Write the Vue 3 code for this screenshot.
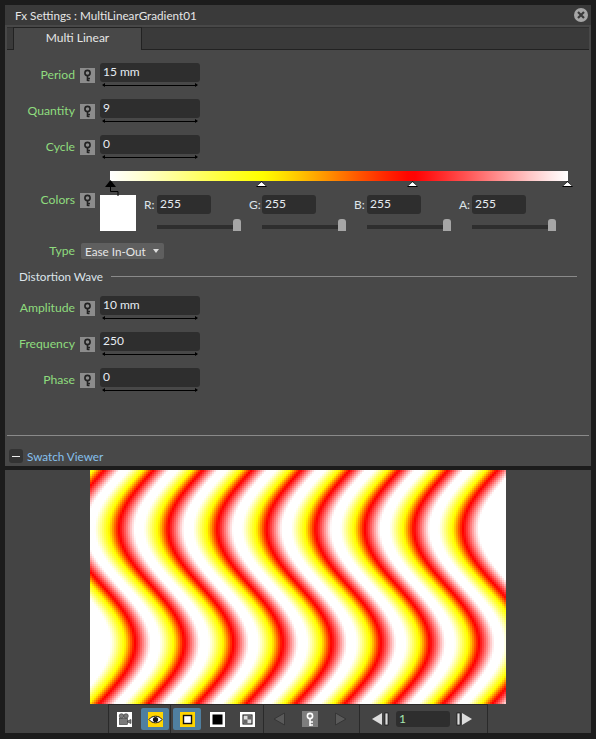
<template>
  <div class="app">
    <section class="settings">
      <header class="title">
        <span>Fx Settings : MultiLinearGradient01</span>
        <span class="close">
          <svg width="14" height="14" viewBox="0 0 14 14">
            <path d="M4 4l6 6M10 4l-6 6" stroke="#3a3a3a" stroke-width="2.2" fill="none" />
          </svg>
        </span>
      </header>
      <div class="tabs">
        <div class="tab">Multi Linear</div>
      </div>

      <div class="body">
        <div v-for="row in topRows" :key="row.label" class="param">
          <span class="label">{{ row.label }}</span>
          <svg class="key" width="15" height="15" viewBox="0 0 15 15">
            <rect width="15" height="15" fill="#8c8c8c" />
            <circle cx="7.5" cy="5" r="2.6" fill="none" stroke="#222" stroke-width="1.6" />
            <path d="M7.5 7v6M7.5 10.5h2.5M7.5 12.5h2" stroke="#222" stroke-width="1.6" fill="none" />
          </svg>
          <div class="field-wrap">
            <div class="field">{{ row.value }}</div>
            <div class="arrow"></div>
          </div>
        </div>

        <div class="colors">
          <div class="bar-wrap">
            <div class="bar" :style="{ background: barGradient }"></div>
            <span class="stop selected" style="left: 0"></span>
            <span class="stop" style="left: 151px"></span>
            <span class="stop" style="left: 302px"></span>
            <span class="stop" style="left: 457px"></span>
            <svg class="link" width="14" height="10" viewBox="0 0 14 10">
              <path d="M1.5 0v4.500h7.500v4.500" fill="none" stroke="#000" stroke-width="1" />
            </svg>
          </div>
          <div class="color-row">
            <span class="label">Colors</span>
            <svg class="key" width="15" height="15" viewBox="0 0 15 15">
              <rect width="15" height="15" fill="#8c8c8c" />
              <circle cx="7.5" cy="5" r="2.6" fill="none" stroke="#222" stroke-width="1.6" />
              <path d="M7.5 7v6M7.5 10.5h2.5M7.5 12.5h2" stroke="#222" stroke-width="1.6" fill="none" />
            </svg>
            <div class="swatch"></div>
            <div class="channels">
              <div v-for="ch in channels" :key="ch" class="channel">
                <div class="channel-top">
                  <span class="channel-name">{{ ch }}:</span>
                  <div class="field small">255</div>
                </div>
                <div class="slider"><span class="thumb"></span></div>
              </div>
            </div>
          </div>
        </div>

        <div class="type-row">
          <span class="label">Type</span>
          <div class="select">
            <span>Ease In-Out</span>
            <span class="caret"></span>
          </div>
        </div>

        <div class="group">
          <span>Distortion Wave</span>
          <div class="rule"></div>
        </div>

        <div v-for="row in waveRows" :key="row.label" class="param">
          <span class="label">{{ row.label }}</span>
          <svg class="key" width="15" height="15" viewBox="0 0 15 15">
            <rect width="15" height="15" fill="#8c8c8c" />
            <circle cx="7.5" cy="5" r="2.6" fill="none" stroke="#222" stroke-width="1.6" />
            <path d="M7.5 7v6M7.5 10.5h2.5M7.5 12.5h2" stroke="#222" stroke-width="1.6" fill="none" />
          </svg>
          <div class="field-wrap">
            <div class="field">{{ row.value }}</div>
            <div class="arrow"></div>
          </div>
        </div>
      </div>

      <footer class="viewer-head">
        <span class="collapse"><i></i></span>
        <span>Swatch Viewer</span>
      </footer>
    </section>

    <section class="viewer">
      <div class="stage">
        <canvas ref="swatch" width="416" height="234"></canvas>
      </div>
      <div class="toolbar">
        <div class="tool-group first">
          <span class="icon-btn">
            <svg width="15" height="15" viewBox="0 0 15 15">
              <rect width="15" height="15" fill="#fff" />
              <circle cx="4.500" cy="4" r="2.300" fill="#7a7a7a" stroke="#333" stroke-width=".6" />
              <circle cx="9" cy="4" r="2.300" fill="#7a7a7a" stroke="#333" stroke-width=".6" />
              <rect x="2.500" y="6.500" width="8" height="6" fill="#7a7a7a" stroke="#333" stroke-width=".6" />
              <path d="M10.500 9l3.500-1.500v4L10.500 10z" fill="#7a7a7a" stroke="#333" stroke-width=".6" />
            </svg>
          </span>
          <span class="icon-btn on">
            <svg width="15" height="15" viewBox="0 0 15 15">
              <rect width="15" height="15" fill="#ffd400" />
              <path d="M1 7.500c3-4.400 10-4.400 13 0-3 4.400-10 4.400-13 0z" fill="#fff" stroke="#111" />
              <circle cx="7.500" cy="7.500" r="2.600" fill="#111" />
            </svg>
          </span>
        </div>
        <div class="tool-group second">
          <span class="icon-btn on">
            <svg width="15" height="15" viewBox="0 0 15 15">
              <rect width="15" height="15" fill="#ffd400" />
              <rect x="3.500" y="3.500" width="8" height="8" fill="#fff" stroke="#111" stroke-width="1.400" />
            </svg>
          </span>
          <span class="icon-btn">
            <svg width="15" height="15" viewBox="0 0 15 15">
              <rect width="15" height="15" fill="#fff" />
              <rect x="2.500" y="2.500" width="10" height="10" fill="#000" />
            </svg>
          </span>
          <span class="icon-btn">
            <svg width="15" height="15" viewBox="0 0 15 15">
              <rect width="15" height="15" fill="#fff" />
              <rect x="3" y="3" width="9" height="9" fill="#ddd" stroke="#111" />
              <rect x="7.500" y="3.500" width="4" height="4" fill="#666" />
              <rect x="3.500" y="7.500" width="4" height="4" fill="#666" />
            </svg>
          </span>
        </div>
        <div class="tool-group third">
          <svg width="12" height="14" viewBox="0 0 12 14"><path d="M11.500 1v12L1 7z" fill="#5a5a5a" stroke="#363636" /></svg>
          <span class="key-btn">
            <svg width="11" height="15" viewBox="0 0 11 15">
              <circle cx="5" cy="4" r="2.600" fill="none" stroke="#fff" stroke-width="1.600" />
              <path d="M5 6v8M5 10h3M5 13h3" stroke="#fff" stroke-width="1.600" fill="none" />
            </svg>
          </span>
          <svg width="12" height="14" viewBox="0 0 12 14"><path d="M.5 1v12L11 7z" fill="#5a5a5a" stroke="#363636" /></svg>
        </div>
        <div class="tool-group fourth">
          <svg width="18" height="14" viewBox="0 0 18 14">
            <path d="M10 1v12L0 7z" fill="#ddd" />
            <rect x="13" y="1" width="3" height="12" fill="#ddd" stroke="#111" stroke-width=".7" />
          </svg>
          <div class="field frame">1</div>
          <svg width="18" height="14" viewBox="0 0 18 14">
            <rect x="1" y="1" width="3" height="12" fill="#ddd" stroke="#111" stroke-width=".7" />
            <path d="M6 1v12l10-6z" fill="#ddd" />
          </svg>
        </div>
      </div>
    </section>
  </div>
</template>

<script setup>
import { onMounted, ref } from "vue";

const topRows = [
  { label: "Period", value: "15 mm" },
  { label: "Quantity", value: "9" },
  { label: "Cycle", value: "0" },
];
const waveRows = [
  { label: "Amplitude", value: "10 mm" },
  { label: "Frequency", value: "250" },
  { label: "Phase", value: "0" },
];
const channels = ["R", "G", "B", "A"];

const WHITE = [255, 255, 255];
const YELLOW = [255, 255, 0];
const RED = [255, 0, 0];

const barStops = [
  { at: 0, rgb: WHITE },
  { at: 0.33, rgb: YELLOW },
  { at: 0.66, rgb: RED },
  { at: 1, rgb: WHITE },
];
// the rendered swatch holds white longer and gets to yellow later than the bar
const swatchStops = [
  { at: 0, rgb: WHITE },
  { at: 0.16, rgb: WHITE },
  { at: 0.44, rgb: YELLOW },
  { at: 0.66, rgb: RED },
  { at: 0.98, rgb: WHITE },
  { at: 1, rgb: WHITE },
];

const ramp = (stops, t) => {
  let i = 0;
  while (i < stops.length - 2 && t > stops[i + 1].at) i++;
  const a = stops[i];
  const b = stops[i + 1];
  const u = Math.min(1, Math.max(0, (t - a.at) / (b.at - a.at)));
  const e = 0.75 * u + 0.25 * u * u * (3 - 2 * u);
  return a.rgb.map((v, n) => Math.round(v + (b.rgb[n] - v) * e));
};

const barGradient = (() => {
  const parts = [];
  for (let i = 0; i <= 60; i++) {
    parts.push(`rgb(${ramp(barStops, i / 60).join(",")}) ${(i / 60) * 100}%`);
  }
  return `linear-gradient(to right, ${parts.join(",")})`;
})();

const swatch = ref(null);

onMounted(() => {
  const ctx = swatch.value.getContext("2d");
  const w = 416;
  const h = 234;
  const img = ctx.createImageData(w, h);
  const period = 49.13;
  const amp = 32.5;
  const wave = 228;
  for (let y = 0; y < h; y++) {
    for (let x = 0; x < w; x++) {
      // 2px cells, the reference is rendered coarse too
      const px = 90 + (x & ~1);
      const py = 470 + (y & ~1);
      const t = (px - amp * Math.sin((2 * Math.PI * (py - 585)) / wave) - 69.1) / period;
      const inside = t >= 0 && t < 9;
      const c = inside ? ramp(swatchStops, t - Math.floor(t)) : WHITE;
      const o = (y * w + x) * 4;
      img.data[o] = c[0];
      img.data[o + 1] = c[1];
      img.data[o + 2] = c[2];
      img.data[o + 3] = 255;
    }
  }
  ctx.putImageData(img, 0, 0);
});
</script>

<style>
html,
body {
  margin: 0;
  background: #1c1c1c;
}
</style>

<style scoped>
.app {
  width: 596px;
  height: 739px;
  box-sizing: border-box;
  padding: 5px 5px 6px 5px;
  background: #1c1c1c;
  font-family: Lato, "Noto Sans", sans-serif;
  font-size: 11.7px;
  color: #e6e6e6;
  display: flex;
  flex-direction: column;
  gap: 4px;
}
.settings {
  height: 461px;
  background: #484848;
  display: flex;
  flex-direction: column;
}
.title {
  height: 20px;
  background: #3a3a3a;
  display: flex;
  align-items: center;
  justify-content: space-between;
  padding: 0 3px 0 10px;
}
.close {
  width: 14px;
  height: 14px;
  border-radius: 50%;
  background: #a6a6a6;
  display: block;
}
.close svg {
  display: block;
}
.tabs {
  height: 23px;
  margin: 2px 2px 0;
  background: #3a3a3a;
  border-bottom: 1px solid #222;
  border-top: 1px solid #2e2e2e;
  box-sizing: border-box;
  padding-left: 6px;
  display: flex;
  align-items: flex-end;
}
.tab {
  width: 129px;
  height: 23px;
  box-sizing: border-box;
  margin-bottom: -1px;
  background: #484848;
  border: 1px solid #222;
  border-bottom: none;
  text-align: center;
  line-height: 19px;
  font-size: 12px;
}
.body {
  flex: 1;
  padding-top: 13px;
}
.param {
  display: flex;
  height: 36px;
  align-items: flex-start;
}
.label {
  width: 70px;
  flex: none;
  text-align: right;
  color: #8fdc7e;
  font-size: 12.2px;
  line-height: 18px;
  padding-top: 3px;
}
.key {
  flex: none;
  margin: 5px 0 0 5px;
}
.field-wrap {
  margin-left: 5px;
  width: 100px;
}
.field {
  height: 19px;
  line-height: 17px;
  padding-left: 3px;
  font-size: 12px;
  background: #2e2e2e;
  border-radius: 3px;
  color: #e6ecf2;
  box-sizing: border-box;
}
.arrow {
  position: relative;
  height: 1px;
  margin: 3px 3px 0;
  background: #000;
}
.arrow::before,
.arrow::after {
  content: "";
  position: absolute;
  top: -2px;
  border: 2.5px solid transparent;
}
.arrow::before {
  left: -1px;
  border-left: none;
  border-right: 3px solid #000;
}
.arrow::after {
  right: -1px;
  border-right: none;
  border-left: 3px solid #000;
}
.colors {
  padding-left: 95px;
}
.bar-wrap {
  position: relative;
  margin-left: 10px;
  width: 458px;
  height: 24px;
}
.bar {
  height: 10px;
}
.stop {
  position: absolute;
  top: 10px;
  width: 11px;
  height: 6px;
  margin-left: -5px;
  background: #000;
  clip-path: polygon(50% 0, 100% 100%, 0 100%);
}
.stop::after {
  content: "";
  position: absolute;
  left: 1px;
  top: 1px;
  width: 9px;
  height: 4px;
  background: #fff;
  clip-path: polygon(50% 0, 100% 100%, 0 100%);
}
.selected {
  top: 9px;
  height: 7px;
}
.selected::after {
  display: none;
}
.link {
  position: absolute;
  left: -1px;
  top: 16px;
}
.color-row {
  display: flex;
  align-items: flex-start;
  margin-left: -95px;
}
.color-row .label {
  margin-top: -4px;
  padding-top: 0;
  height: 18px;
}
.color-row .key {
  margin-top: -2px;
}
.swatch {
  flex: none;
  width: 36px;
  height: 36px;
  margin-left: 5px;
  background: #fff;
}
.channels {
  display: flex;
  gap: 6px;
  margin-left: 8px;
}
.channel {
  width: 99px;
}
.channel-top {
  display: flex;
  align-items: center;
}
.channel-name {
  width: 13px;
  flex: none;
  color: #dde4ea;
  font-size: 12px;
}
.small {
  width: 54px;
}
.slider {
  position: relative;
  height: 4px;
  width: 84px;
  margin: 11px 0 0 13px;
  background: #2e2e2e;
}
.thumb {
  position: absolute;
  right: 0;
  top: -6px;
  width: 8px;
  height: 12px;
  border-radius: 3px 3px 0 0;
  background: #a6a6a6;
}
.type-row {
  display: flex;
  height: 34px;
  margin-top: 12px;
  align-items: flex-start;
}
.type-row .label {
  padding-top: 0;
  line-height: 16px;
}
.select {
  margin-left: 6px;
  width: 83px;
  height: 16px;
  line-height: 15px;
  padding: 0 5px 0 4px;
  box-sizing: border-box;
  background: #5f5f5f;
  border-radius: 2px;
  display: flex;
  justify-content: space-between;
  align-items: center;
}
.caret {
  width: 0;
  height: 0;
  border: 3.5px solid transparent;
  border-top: 4px solid #ddd;
  border-bottom: none;
}
.group {
  display: flex;
  align-items: center;
  gap: 8px;
  height: 16px;
  padding-left: 14px;
  margin: -9px 14px 12px 0;
  color: #dce4ea;
}
.rule {
  flex: 1;
  height: 1px;
  background: #8a8a8a;
}
.viewer-head {
  height: 31px;
  margin: 0 2px;
  box-sizing: border-box;
  border-top: 1px solid #8a8a8a;
  display: flex;
  align-items: center;
  gap: 4px;
  padding: 10px 0 0 2px;
  color: #86c0ee;
}
.collapse {
  width: 14px;
  height: 14px;
  border-radius: 3px;
  background: #333;
  display: flex;
  align-items: center;
  justify-content: center;
}
.collapse i {
  width: 8px;
  height: 1px;
  background: #eee;
}
.viewer {
  flex: 1;
  background: #444;
  display: flex;
  flex-direction: column;
}
.stage {
  height: 234px;
  display: flex;
  justify-content: center;
}
.stage canvas {
  display: block;
}
.toolbar {
  height: 29px;
  padding-left: 103px;
  display: flex;
  box-sizing: border-box;
}
.tool-group {
  height: 29px;
  box-sizing: border-box;
  border-left: 1px solid #2a2a2a;
  border-top: 1px solid #2a2a2a;
  display: flex;
  align-items: center;
}
.first {
  width: 62px;
  padding-left: 1px;
  gap: 3px;
}
.second {
  width: 93px;
  padding-left: 2px;
  gap: 2px;
}
.third {
  width: 96px;
  padding-left: 9px;
  gap: 17px;
}
.fourth {
  width: 129px;
  padding-left: 12px;
  gap: 6px;
  border-right: 1px solid #2a2a2a;
}
.icon-btn {
  width: 28px;
  height: 22px;
  border-radius: 2px;
  display: flex;
  align-items: center;
  justify-content: center;
}
.icon-btn.on {
  background: #4f7fa0;
}
.key-btn {
  width: 16px;
  height: 16px;
  background: #7d7d7d;
  display: flex;
  align-items: center;
  justify-content: center;
}
.frame {
  width: 54px;
  height: 16px;
  line-height: 15px;
  color: #a8e8b0;
}
</style>
